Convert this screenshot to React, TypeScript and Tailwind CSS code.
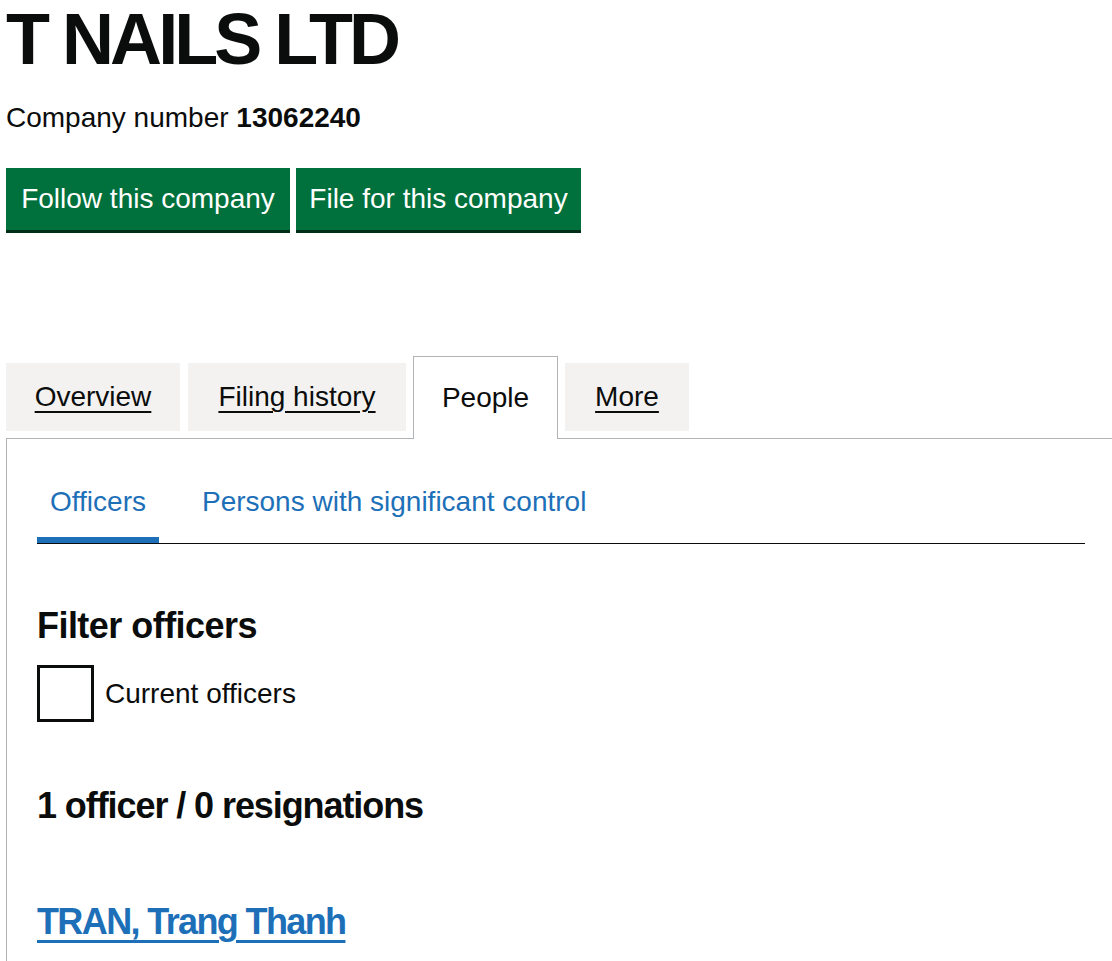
import React from 'react';

const font = { fontFamily: '"Liberation Sans", Arial, sans-serif' };

function Tab({ label, width, active }: { label: string; width: string; active?: boolean }) {
  if (active) {
    return (
      <li className={`relative z-10 -mb-px flex h-[83px] items-center justify-center border border-b-0 border-[#b1b4b6] bg-white text-[28px] text-[#0b0c0c] ${width}`}>
        {label}
      </li>
    );
  }
  return (
    <li className={`mb-[7px] flex h-[68px] items-center justify-center bg-[#f3f2f1] text-[28px] ${width}`}>
      <a href="#" className="text-[#0b0c0c] underline decoration-[2px] underline-offset-[5px]">
        {label}
      </a>
    </li>
  );
}

export default function App() {
  return (
    <div className="min-h-screen bg-white pl-[6px] text-[#0b0c0c]" style={font}>
      <h1 className="pt-[2px] text-[72px] font-bold leading-[75px] tracking-[-0.055em]">T NAILS LTD</h1>

      <p className="mt-[23px] text-[28px] leading-[35px]">
        Company number <strong className="font-bold">13062240</strong>
      </p>

      <div className="mt-[33px] flex gap-[6px]">
        <button className="h-[62px] w-[284px] bg-[#00703c] text-[28px] text-white shadow-[0_3px_0_#002d18]">
          Follow this company
        </button>
        <button className="h-[62px] w-[285px] bg-[#00703c] text-[28px] text-white shadow-[0_3px_0_#002d18]">
          File for this company
        </button>
      </div>

      <ul className="mt-[126px] flex items-end">
        <Tab label="Overview" width="w-[174px]" />
        <li className="w-[8px]" />
        <Tab label="Filing history" width="w-[218px]" />
        <li className="w-[7px]" />
        <Tab label="People" width="w-[145px]" active />
        <li className="w-[7px]" />
        <Tab label="More" width="w-[124px]" />
      </ul>

      <section className="border-l border-t border-[#b1b4b6] pb-[40px] pl-[30px] pr-[27px] pt-[45px]">
        <ul className="flex border-b border-[#0b0c0c] text-[28px] leading-[35px]">
          <li className="border-b-[6px] border-[#1d70b8] px-[13px] pb-[18px]">
            <a href="#" className="text-[#1d70b8]">Officers</a>
          </li>
          <li className="ml-[30px] px-[13px] pb-[24px]">
            <a href="#" className="text-[#1d70b8]">Persons with significant control</a>
          </li>
        </ul>

        <h2 className="mt-[62px] text-[36px] font-bold leading-[40px] tracking-[-0.015em]">Filter officers</h2>
        <label className="mt-[19px] flex items-center gap-[11px] text-[28px]">
          <span className="block h-[57px] w-[57px] border-[3px] border-[#0b0c0c] bg-white" />
          Current officers
        </label>

        <h2 className="mt-[64px] text-[36px] font-bold leading-[40px] tracking-[-0.03em]">1 officer / 0 resignations</h2>

        <h2 className="mt-[76px] text-[36px] font-bold leading-[40px] tracking-[-0.045em]">
          <a href="#" className="text-[#1d70b8] underline decoration-[3px] underline-offset-[6px]">
            TRAN, Trang Thanh
          </a>
        </h2>
      </section>
    </div>
  );
}
